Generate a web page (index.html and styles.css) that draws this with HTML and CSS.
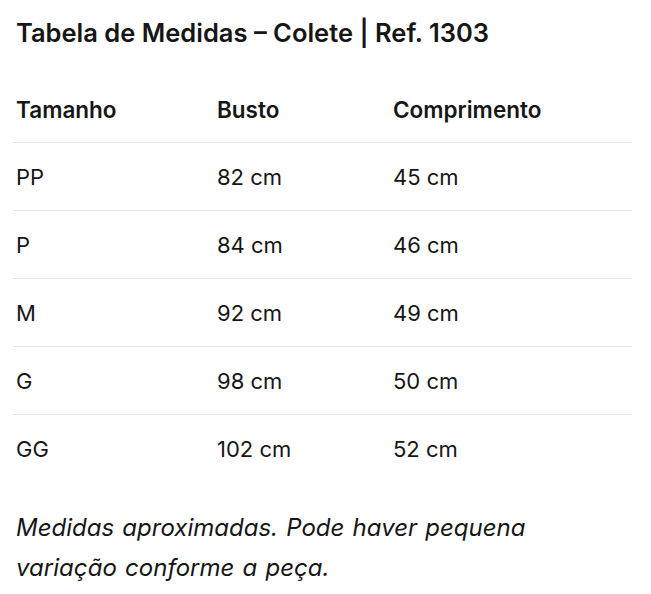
FILE: index.html
```html
<!DOCTYPE html>
<html lang="pt-BR">
<head>
<meta charset="utf-8">
<link rel="stylesheet" href="styles.css">
</head>
<body>
<main class="page">
  <h1 class="title">Tabela de Medidas – Colete | Ref. 1303</h1>
  <div class="table">
    <div class="row head">
      <div class="c1">Tamanho</div><div class="c2">Busto</div><div class="c3">Comprimento</div>
    </div>
    <div class="row">
      <div class="c1">PP</div><div class="c2">82 cm</div><div class="c3">45 cm</div>
    </div>
    <div class="row">
      <div class="c1">P</div><div class="c2">84 cm</div><div class="c3">46 cm</div>
    </div>
    <div class="row">
      <div class="c1">M</div><div class="c2">92 cm</div><div class="c3">49 cm</div>
    </div>
    <div class="row">
      <div class="c1">G</div><div class="c2">98 cm</div><div class="c3">50 cm</div>
    </div>
    <div class="row last">
      <div class="c1">GG</div><div class="c2">102 cm</div><div class="c3">52 cm</div>
    </div>
  </div>
  <p class="note">Medidas aproximadas. Pode haver pequena variação conforme a peça.</p>
</main>
</body>
</html>
```
FILE: styles.css
```css
html, body {
  margin: 0;
  padding: 0;
  background: #ffffff;
}
body {
  font-family: Inter, "Liberation Sans", sans-serif;
  color: #161616;
}
.page {
  padding: 17px 19px 0 13px;
}
.title {
  margin: 0 0 0 3px;
  font-size: 25.5px;
  font-weight: 600;
  line-height: 32px;
}
.table {
  margin-top: 26px;
}
.row {
  box-sizing: border-box;
  display: grid;
  grid-template-columns: 201px 176px 1fr;
  align-items: center;
  height: 68px;
  border-bottom: 1px solid #e6e6e6;
  font-size: 22px;
  padding-left: 3px;
}
.row.head {
  font-weight: 600;
  font-size: 22.5px;
  padding-top: 2px;
}
.row.last {
  border-bottom: none;
}
.note {
  margin: 25px 0 0 3px;
  font-size: 24px;
  font-style: italic;
  line-height: 40px;
  word-spacing: 1.5px;
  max-width: 580px;
}
```
